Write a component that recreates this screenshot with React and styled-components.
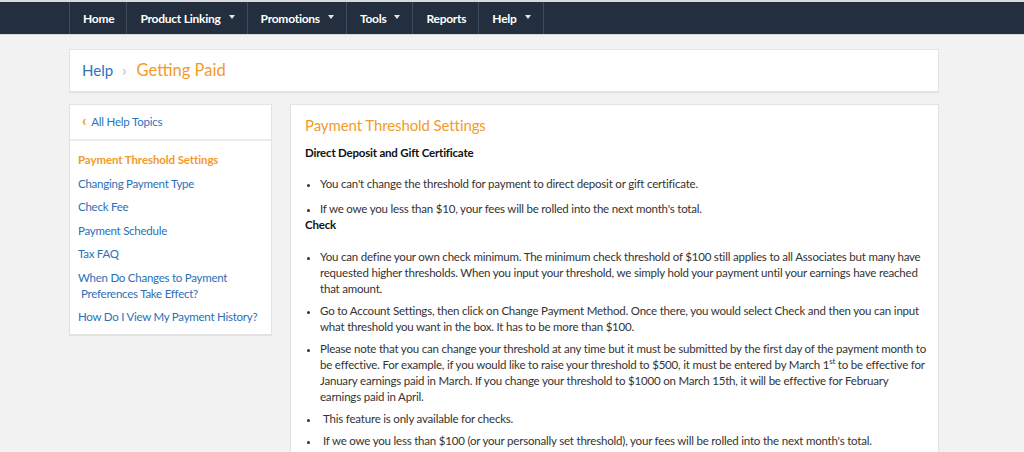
import React from "react";
import styled, { createGlobalStyle } from "styled-components";

const GlobalStyle = createGlobalStyle`
  html, body {
    margin: 0;
    padding: 0;
    background: #f2f2f2;
    font-family: Lato, "Open Sans", "Liberation Sans", sans-serif;
    color: #333;
  }
`;

const navItems = [
  { label: "Home" },
  { label: "Product Linking", menu: true },
  { label: "Promotions", menu: true },
  { label: "Tools", menu: true },
  { label: "Reports" },
  { label: "Help", menu: true },
];

const topics = [
  { label: "Payment Threshold Settings", active: true },
  { label: "Changing Payment Type" },
  { label: "Check Fee" },
  { label: "Payment Schedule" },
  { label: "Tax FAQ" },
  { label: "When Do Changes to Payment", second: "Preferences Take Effect?" },
  { label: "How Do I View My Payment History?" },
];

const App = () => {
  return (
    <>
      <GlobalStyle />
      <NavBar>
        <NavInner>
          {navItems.map((item) => (
            <NavItem key={item.label}>
              {item.label}
              {item.menu && <Caret />}
            </NavItem>
          ))}
        </NavInner>
      </NavBar>
      <Page>
        <Breadcrumb>
          <CrumbLink>Help</CrumbLink>
          <CrumbSep>›</CrumbSep>
          <CrumbCurrent>Getting Paid</CrumbCurrent>
        </Breadcrumb>
        <Columns>
          <Sidebar>
            <SideHeader>
              <Chevron>‹</Chevron>
              All Help Topics
            </SideHeader>
            <TopicList>
              {topics.map((t) => (
                <Topic key={t.label} $active={t.active}>
                  {t.label}
                  {t.second && (
                    <>
                      <br />
                      <Indent>{t.second}</Indent>
                    </>
                  )}
                </Topic>
              ))}
            </TopicList>
          </Sidebar>
          <Content>
            <Title>Payment Threshold Settings</Title>
            <SubHead>Direct Deposit and Gift Certificate</SubHead>
            <Bullets $gap="9px">
              <li>You can't change the threshold for payment to direct deposit or gift certificate.</li>
              <li>If we owe you less than $10, your fees will be rolled into the next month's total.</li>
            </Bullets>
            <SubHead $tight>Check</SubHead>
            <Bullets $gap="6px">
              <li>
                You can define your own check minimum. The minimum check threshold of $100 still applies to all
                Associates but many have requested higher thresholds. When you input your threshold, we simply hold
                your payment until your earnings have reached that amount.
              </li>
              <li>
                Go to Account Settings, then click on Change Payment Method. Once there, you would select Check and
                then you can input what threshold you want in the box. It has to be more than $100.
              </li>
              <li>
                Please note that you can change your threshold at any time but it must be submitted by the first day
                of the payment month to be effective. For example, if you would like to raise your threshold to $500,
                it must be entered by March 1<sup>st</sup> to be effective for January earnings paid in March. If you
                change your threshold to $1000 on March 15th, it will be effective for February earnings paid in
                April.
              </li>
              <li>
                <Indent>This feature is only available for checks.</Indent>
              </li>
              <li>
                <Indent>
                  If we owe you less than $100 (or your personally set threshold), your fees will be rolled into the
                  next month's total.
                </Indent>
              </li>
            </Bullets>
          </Content>
        </Columns>
      </Page>
    </>
  );
};

const NavBar = styled.div`
  border-top: 2px solid #d9dadb;
  background: #232f3e;
  height: 32px;
  border-bottom: 1px solid #d4d6d9;
`;

const NavInner = styled.div`
  display: flex;
  margin-left: 69px;
  height: 100%;
  border-left: 1px solid #3f4b5b;
`;

const NavItem = styled.div`
  display: flex;
  align-items: center;
  gap: 8px;
  padding: 0 12px 0 13px;
  border-right: 1px solid #3f4b5b;
  color: #ffffff;
  font-size: 12px;
  font-weight: 700;
  letter-spacing: -0.25px;
`;

const Caret = styled.span`
  width: 0;
  height: 0;
  border-left: 3px solid transparent;
  border-right: 3px solid transparent;
  border-top: 4px solid #e6e6e6;
  margin-top: -3px;
`;

const Page = styled.div`
  width: 870px;
  margin: 14px 0 0 69px;
`;

const Card = styled.div`
  background: #fff;
  border: 1px solid #e3e3e3;
  box-shadow: 0 1px 1px rgba(0, 0, 0, 0.06);
  box-sizing: border-box;
`;

const Breadcrumb = styled(Card)`
  height: 43px;
  display: flex;
  align-items: center;
  padding: 0 0 2px 12px;
`;

const CrumbLink = styled.span`
  color: #2b74c0;
  font-size: 15px;
`;

const CrumbSep = styled.span`
  color: #b8b8b8;
  font-size: 16px;
  margin: 0 10px 0 9px;
`;

const CrumbCurrent = styled.span`
  color: #f39a2a;
  font-size: 16.5px;
`;

const Columns = styled.div`
  display: flex;
  align-items: flex-start;
  gap: 18px;
  margin-top: 12px;
`;

const Sidebar = styled(Card)`
  width: 203px;
  flex-shrink: 0;
  padding-bottom: 9px;
`;

const SideHeader = styled.div`
  height: 32px;
  display: flex;
  align-items: center;
  padding: 0 0 2px 12px;
  border-bottom: 2px solid #ebebeb;
  color: #2b74c0;
  font-size: 11.5px;
  letter-spacing: -0.2px;
`;

const Chevron = styled.span`
  color: #f39a2a;
  font-weight: 900;
  font-size: 15px;
  margin: -2px 5px 0 0;
`;

const TopicList = styled.div`
  display: flex;
  flex-direction: column;
  gap: 7.5px;
  padding: 11px 4px 0 8px;
`;

const Topic = styled.div`
  font-size: 11.5px;
  line-height: 16px;
  letter-spacing: ${(p) => (p.$active ? "-0.1px" : "-0.25px")};
  color: ${(p) => (p.$active ? "#f39a2a" : "#2b6fb8")};
  font-weight: ${(p) => (p.$active ? 700 : 400)};
`;

const Indent = styled.span`
  padding-left: 3px;
`;

const Content = styled(Card)`
  flex: 1;
  padding: 10px 8px 8px 14px;
  min-height: 380px;
  font-size: 11.5px;
  line-height: 16px;
  letter-spacing: -0.2px;
  color: #333;
`;

const Title = styled.div`
  color: #f39a2a;
  font-size: 15px;
  line-height: 20px;
  letter-spacing: -0.1px;
  margin-bottom: 10px;
`;

const SubHead = styled.div`
  font-weight: 700;
  color: #111;
  font-size: 11.5px;
  line-height: 16px;
  margin-bottom: ${(p) => (p.$tight ? "16px" : "0")};
`;

const Bullets = styled.ul`
  margin: 15px 0 0 0;
  padding-left: 15px;
  list-style: disc;

  li {
    margin-bottom: ${(p) => p.$gap};
  }
  li:last-child {
    margin-bottom: 0;
  }
  li::marker {
    font-size: 10px;
  }
  sup {
    font-size: 8px;
    line-height: 0;
  }
`;

export default App;
